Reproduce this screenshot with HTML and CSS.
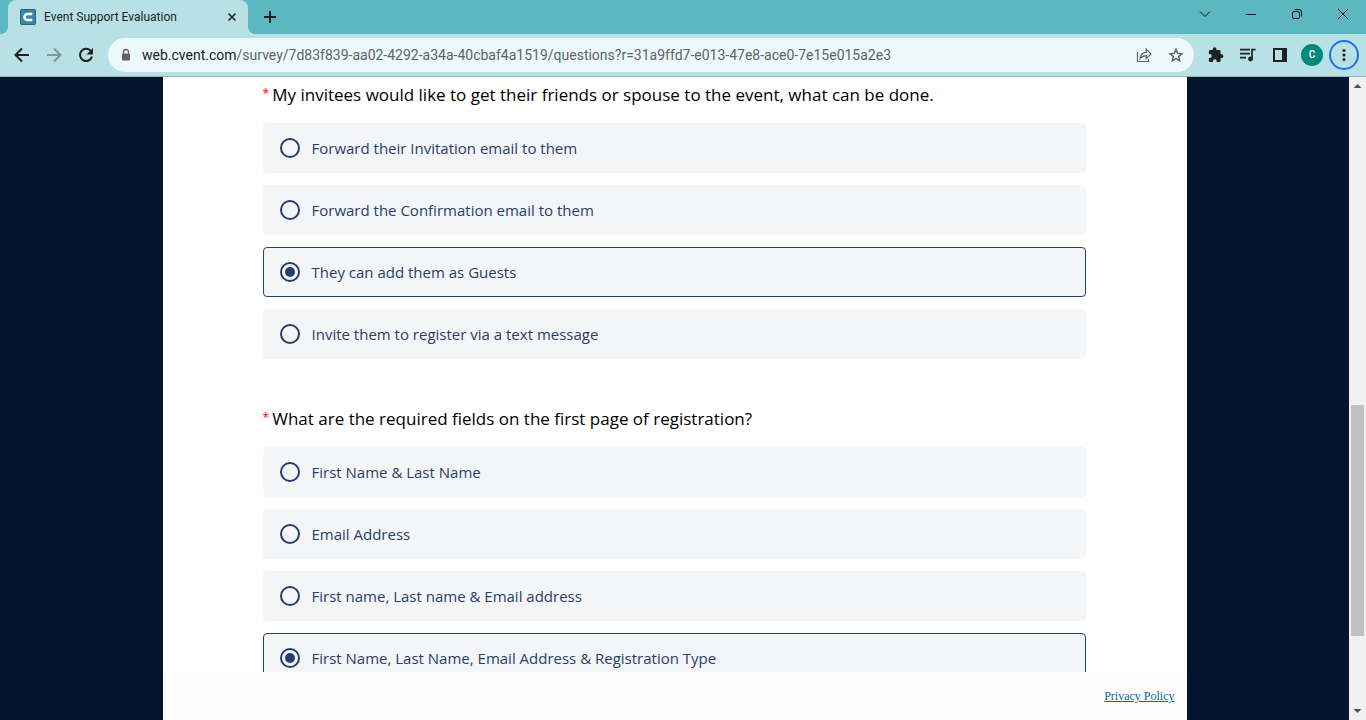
FILE: index.html
```html
<!DOCTYPE html>
<html lang="en">
<head>
<meta charset="utf-8">
<title>Event Support Evaluation</title>
<link rel="stylesheet" href="styles.css">
</head>
<body>
<header class="chrome">
  <div class="tab-strip">
    <div class="tab">
      <svg class="favicon" viewBox="0 0 16 16" aria-hidden="true"><rect x=".5" y=".5" width="15" height="15" rx="1" fill="#3a87a8" stroke="#1f668a"/><path d="M12.300 5H7.500a3 3 0 0 0 0 6h4.800" fill="none" stroke="#fff" stroke-width="2.600"/></svg>
      <span class="tab-title">Event Support Evaluation</span>
      <button class="tab-close" aria-label="Close tab"><svg viewBox="0 0 16 16"><path d="M4.500 4.500l7 7M11.500 4.500l-7 7" stroke="#202124" stroke-width="1.600"/></svg></button>
    </div>
    <button class="new-tab" aria-label="New tab"><svg viewBox="0 0 16 16"><path d="M8 2v12M2 8h12" stroke="#202124" stroke-width="2"/></svg></button>
    <div class="window-controls">
      <button aria-label="Search tabs"><svg viewBox="0 0 16 16"><path d="M3 5.500l5 5 5-5" fill="none" stroke="#111"/></svg></button>
      <button aria-label="Minimize"><svg viewBox="0 0 16 16"><path d="M3 8.500h10" stroke="#111"/></svg></button>
      <button aria-label="Restore"><svg viewBox="0 0 16 16"><rect x="3.500" y="5.500" width="7" height="7" rx="1.500" fill="none" stroke="#111"/><path d="M5.500 3.500h4.500a2.500 2.500 0 0 1 2.500 2.500v4.500" fill="none" stroke="#111"/></svg></button>
      <button aria-label="Close window"><svg viewBox="0 0 16 16"><path d="M3 3l10 10M13 3L3 13" stroke="#111"/></svg></button>
    </div>
  </div>
  <div class="toolbar">
    <button class="tool" aria-label="Back"><svg viewBox="0 0 20 20"><path d="M17 10H4M10 3.500L3.500 10l6.500 6.500" fill="none" stroke="#202124" stroke-width="2"/></svg></button>
    <button class="tool" aria-label="Forward" disabled><svg viewBox="0 0 20 20"><path d="M3 10h13M10 3.500l6.500 6.500-6.500 6.500" fill="none" stroke="#7c9799" stroke-width="2"/></svg></button>
    <button class="tool" aria-label="Reload"><svg viewBox="0 0 20 20"><path d="M15 6.200A6.100 6.100 0 1 0 16 11.500" fill="none" stroke="#202124" stroke-width="2"/><path d="M17 3v6.500h-6.500z" fill="#202124"/></svg></button>
    <div class="omnibox">
      <svg class="lock" viewBox="0 0 16 16" aria-hidden="true"><rect x="4" y="6.500" width="8" height="7" rx="1" fill="#5f6368"/><path d="M5.500 7V5a2.500 2.500 0 0 1 5 0v2" fill="none" stroke="#5f6368" stroke-width="1.300"/></svg>
      <p class="url"><span class="host">web.cvent.com</span>/survey/7d83f839-aa02-4292-a34a-40cbaf4a1519/questions?r=31a9ffd7-e013-47e8-ace0-7e15e015a2e3</p>
      <button class="tool" aria-label="Share"><svg viewBox="0 0 20 20"><path d="M3.500 7v9.500h11V14M6.200 13.500c.3-4 2.800-6.200 6-6.200V4.200L17 9l-4.800 4.700v-3c-2.800 0-4.400.8-6 2.800z" fill="none" stroke="#5f6368" stroke-width="1.200"/></svg></button>
      <button class="tool" aria-label="Bookmark this page"><svg viewBox="0 0 20 20"><path d="M10 4.500l1.700 3.900 4.200.4-3.200 2.800 1 4.200-3.700-2.200-3.700 2.200 1-4.200-3.200-2.800 4.200-.4z" fill="none" stroke="#5f6368" stroke-width="1.500"/></svg></button>
    </div>
    <div class="actions">
      <button class="tool" aria-label="Extensions"><svg viewBox="0 0 20 20"><path d="M15.500 9.300h-.9V6.500c0-.8-.6-1.400-1.400-1.400h-2.700v-.9a1.900 1.900 0 0 0-3.800 0v.9H4.300c-.8 0-1.400.6-1.400 1.400v2.600h.8a2 2 0 0 1 0 4H2.900v2.700c0 .7.600 1.300 1.400 1.300h2.600v-.9a1.900 1.900 0 0 1 3.800 0v.9h2.500c.8 0 1.400-.6 1.400-1.300v-2.700h.9a1.900 1.900 0 0 0 0-3.800z" fill="#202124"/></svg></button>
      <button class="tool" aria-label="Media controls"><svg viewBox="0 0 20 20"><path d="M2 4.700h10M2 8.700h10M2 12.700h6M14 14V4.700h3.500" fill="none" stroke="#202124" stroke-width="1.700"/><circle cx="12.500" cy="14" r="2.400" fill="#202124"/></svg></button>
      <button class="tool" aria-label="Side panel"><svg viewBox="0 0 20 20"><path d="M3 3h14v14H3zM5 5v10h7V5z" fill="#202124" fill-rule="evenodd"/></svg></button>
      <button class="tool" aria-label="Profile"><span class="avatar">C</span></button>
      <button class="tool" aria-label="Menu"><span class="menu-ring"><svg viewBox="0 0 20 20"><g fill="#202124"><circle cx="10" cy="5" r="1.700"/><circle cx="10" cy="10" r="1.700"/><circle cx="10" cy="15" r="1.700"/></g></svg></span></button>
    </div>
  </div>
</header>
<div class="viewport">
  <div class="backdrop">
    <div class="sheet">
      <main class="survey">
        <fieldset class="question">
          <legend class="question-title"><span class="required">* </span>My invitees would like to get their friends or spouse to the event, what can be done.</legend>
          <div class="options">
            <label class="option"><input type="radio" name="guests"><span>Forward their Invitation email to them</span></label>
            <label class="option"><input type="radio" name="guests"><span>Forward the Confirmation email to them</span></label>
            <label class="option"><input type="radio" name="guests" checked><span>They can add them as Guests</span></label>
            <label class="option"><input type="radio" name="guests"><span>Invite them to register via a text message</span></label>
          </div>
        </fieldset>
        <fieldset class="question">
          <legend class="question-title"><span class="required">* </span>What are the required fields on the first page of registration?</legend>
          <div class="options">
            <label class="option"><input type="radio" name="fields"><span>First Name &amp; Last Name</span></label>
            <label class="option"><input type="radio" name="fields"><span>Email Address</span></label>
            <label class="option"><input type="radio" name="fields"><span>First name, Last name &amp; Email address</span></label>
            <label class="option"><input type="radio" name="fields" checked><span>First Name, Last Name, Email Address &amp; Registration Type</span></label>
          </div>
        </fieldset>
      </main>
      <footer class="page-footer"><a href="#privacy">Privacy Policy</a></footer>
    </div>
  </div>
  <div class="scrollbar" aria-hidden="true">
    <svg class="arrow" viewBox="0 0 17 17"><path d="M4.500 11h8l-4-4z" fill="#505050"/></svg>
    <div class="track"><div class="thumb"></div></div>
    <svg class="arrow" viewBox="0 0 17 17"><path d="M4.500 6h8l-4 4z" fill="#505050"/></svg>
  </div>
</div>
</body>
</html>
```

FILE: styles.css
```css
* { box-sizing: border-box; }

body {
  margin: 0;
  height: 100vh;
  display: flex;
  flex-direction: column;
  overflow: hidden;
  font-family: "Open Sans", sans-serif;
}

button {
  display: flex;
  align-items: center;
  justify-content: center;
  flex: none;
  padding: 0;
  border: 0;
  background: none;
}

/* Browser frame */
.chrome { flex: none; border-bottom: 1px solid #8fb5b8; background: #b7e1e4; }

.tab-strip { display: flex; height: 34px; padding-left: 8px; background: #5bb8c1; }

.tab {
  position: relative;
  display: flex;
  align-items: center;
  width: 240px;
  padding: 0 8px 0 12px;
  border-radius: 8px 8px 0 0;
  background: #b7e1e4;
}

.tab::before,
.tab::after {
  content: "";
  position: absolute;
  bottom: 0;
  width: 8px;
  height: 8px;
}

.tab::before { right: 100%; background: radial-gradient(circle at 0 0, transparent 8px, #b7e1e4 8px); }
.tab::after { left: 100%; background: radial-gradient(circle at 100% 0, transparent 8px, #b7e1e4 8px); }

.favicon { width: 16px; height: 16px; }
.tab-title {
  flex: 1;
  margin-left: 8px;
  color: #202124;
  font: 12px/16px Roboto, sans-serif;
  white-space: nowrap;
}
.tab-close svg, .new-tab svg { width: 16px; height: 16px; }
.new-tab { width: 44px; }

.window-controls { display: flex; margin-left: auto; }
.window-controls button { width: 46px; height: 28px; }
.window-controls svg { width: 16px; height: 16px; }

.toolbar { display: flex; align-items: center; height: 42px; padding: 0 6px; }
.tool { width: 32px; height: 34px; }
.tool svg { width: 20px; height: 20px; }

.omnibox {
  display: flex;
  align-items: center;
  flex: 1;
  min-width: 0;
  height: 34px;
  margin-left: 6px;
  padding: 0 2px 0 10px;
  border-radius: 17px;
  background: #ecf8f9;
}
.lock { flex: none; width: 16px; height: 16px; }
.url {
  flex: 1;
  min-width: 0;
  margin: 0 0 0 8px;
  overflow: hidden;
  color: #5f6368;
  font: 14px/20px Roboto, sans-serif;
  white-space: nowrap;
}
.host { color: #202124; }

.actions { display: flex; margin-left: 6px; }
.avatar {
  width: 22px;
  height: 22px;
  border-radius: 50%;
  background: #00897b;
  color: #fff;
  font: 500 10px/22px Roboto, sans-serif;
}
.menu-ring {
  display: flex;
  align-items: center;
  justify-content: center;
  flex: none;
  width: 30px;
  height: 30px;
  border: 2px solid #1a73e8;
  border-radius: 50%;
}
.menu-ring svg { width: 18px; height: 18px; }

/* Page area */
.viewport { display: flex; flex: 1; min-height: 0; }

.backdrop { display: flex; flex: 1; justify-content: center; min-width: 0; background: #03152f; }

.sheet {
  display: flex;
  flex-direction: column;
  width: 100%;
  max-width: 1024px;
  background: #fff;
}

.survey { flex: 1; min-height: 0; padding: 6px 101px 0 100px; overflow: hidden; }

.question { min-width: 0; margin: 0 0 48px; padding: 0; border: 0; }
.question-title {
  margin-bottom: 16px;
  padding: 0;
  color: #000;
  font-size: 17px;
  line-height: 24px;
}
.required { color: #f00; font-size: 12px; line-height: 12px; vertical-align: 3px; }

.options { display: flex; flex-direction: column; gap: 12px; }
.option {
  display: flex;
  align-items: center;
  gap: 12px;
  height: 50px;
  padding: 0 16px;
  border: 1px solid #f3f5f7;
  border-radius: 4px;
  background: #f3f5f7;
  color: #293f68;
  font-size: 15px;
  line-height: 20px;
}
.option:has(input:checked) { border-color: #263e6c; }

.option input {
  appearance: none;
  display: grid;
  place-items: center;
  flex: none;
  width: 20px;
  height: 20px;
  margin: 0;
  border: 2px solid #263e6c;
  border-radius: 50%;
}
.option input:checked::before {
  content: "";
  width: 10px;
  height: 10px;
  border-radius: 50%;
  background: #263e6c;
}

.page-footer {
  display: flex;
  align-items: center;
  justify-content: flex-end;
  flex: none;
  height: 48px;
  padding: 0 12px;
  background: #fcfcfc;
  font: 12px/16px "Liberation Serif", serif;
}
.page-footer a { color: #006a99; }

.scrollbar { display: flex; flex-direction: column; flex: none; width: 17px; background: #f1f1f1; }
.arrow { flex: none; width: 17px; height: 17px; }
.track { flex: 1; display: flex; flex-direction: column; padding: 0 2px; }
.track::before { content: ""; flex: 51; }
.track::after { content: ""; flex: 11; }
.thumb { flex: 38; background: #c1c1c1; }
```
